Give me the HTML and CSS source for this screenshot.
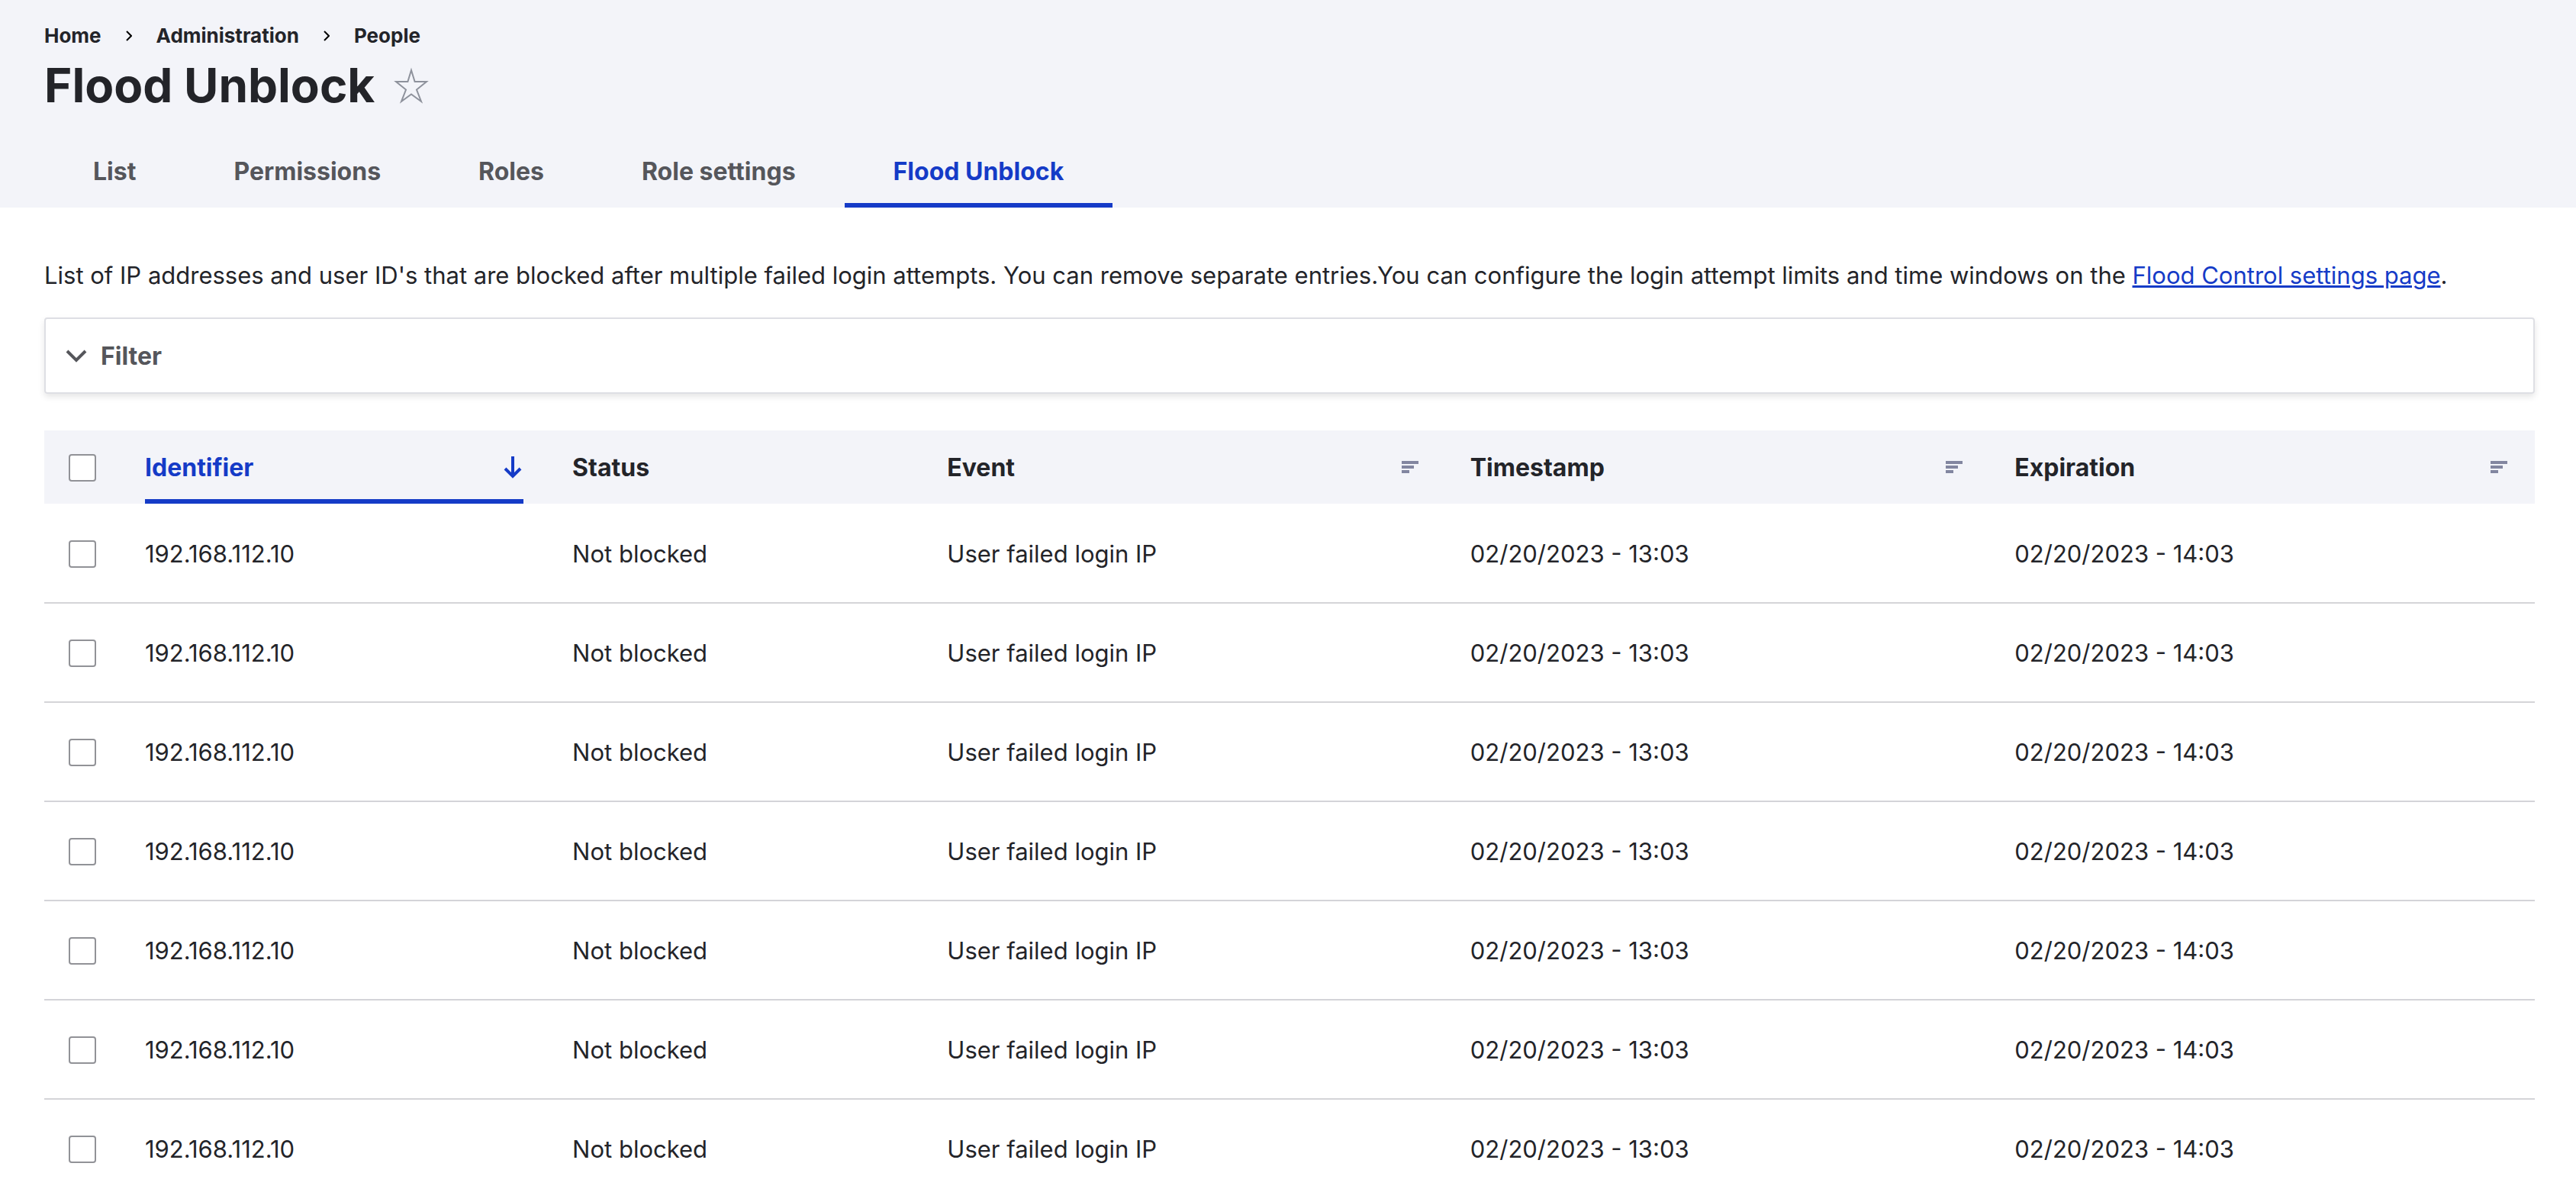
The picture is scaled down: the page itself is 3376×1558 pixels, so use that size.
FILE: index.html
```html
<!DOCTYPE html>
<html lang="en">
<head>
    <meta charset="UTF-8">
    <meta name="viewport" content="width=device-width, initial-scale=1.0">
    <title>Flood Unblock</title>
    <link rel="stylesheet" href="styles.css">
</head>
<body>
    <header class="page-header">
        <nav class="breadcrumb" aria-label="Breadcrumb">
            <a href="#">Home</a>
            <svg class="breadcrumb-sep" viewBox="0 0 8 14"><path d="M1 1l6 6-6 6"/></svg>
            <a href="#">Administration</a>
            <svg class="breadcrumb-sep" viewBox="0 0 8 14"><path d="M1 1l6 6-6 6"/></svg>
            <a href="#">People</a>
        </nav>
        <div class="title-row">
            <h1>Flood Unblock</h1>
            <button type="button" class="shortcut" aria-label="Add to shortcuts">
                <svg viewBox="0 0 48 48"><path d="M24 4l4.600 15H44L31 29.500 37 45 24 35.500 11 45l6-15.500L4 19h15.400z"/></svg>
            </button>
        </div>
        <nav class="tabs" aria-label="Tabs">
            <a href="#">List</a>
            <a href="#">Permissions</a>
            <a href="#">Roles</a>
            <a href="#">Role settings</a>
            <a href="#" class="active" aria-current="page">Flood Unblock</a>
        </nav>
    </header>

    <main class="content">
        <p class="intro">List of IP addresses and user ID's that are blocked after multiple failed login attempts. You can remove separate entries.You can configure the login attempt limits and time windows on the <a href="#">Flood Control settings page</a>.</p>

        <details class="filter">
            <summary>
                <svg class="chevron" viewBox="0 0 28 18"><path d="M2 2l12 12L26 2"/></svg>
                Filter
            </summary>
        </details>

        <table class="flood-table">
            <colgroup>
                <col class="col-select">
                <col class="col-identifier">
                <col class="col-status">
                <col class="col-event">
                <col class="col-timestamp">
                <col class="col-expiration">
            </colgroup>
            <thead>
                <tr>
                    <th><input type="checkbox" id="selectAll" aria-label="Select all rows"></th>
                    <th><a href="#" class="sort sorted">Identifier <svg viewBox="0 0 32 32"><path class="arrow" d="M18 1v26M8 17l10 10 10-10"/></svg></a></th>
                    <th>Status</th>
                    <th><a href="#" class="sort">Event <svg viewBox="0 0 32 32"><path d="M6 7h22v4H6zM6 13h16v4H6zM6 19h10v4H6z"/></svg></a></th>
                    <th><a href="#" class="sort">Timestamp <svg viewBox="0 0 32 32"><path d="M6 7h22v4H6zM6 13h16v4H6zM6 19h10v4H6z"/></svg></a></th>
                    <th><a href="#" class="sort">Expiration <svg viewBox="0 0 32 32"><path d="M6 7h22v4H6zM6 13h16v4H6zM6 19h10v4H6z"/></svg></a></th>
                </tr>
            </thead>
            <tbody>
                <tr>
                    <td><input type="checkbox" aria-label="Select row 1"></td>
                    <td>192.168.112.10</td>
                    <td>Not blocked</td>
                    <td>User failed login IP</td>
                    <td>02/20/2023 - 13:03</td>
                    <td>02/20/2023 - 14:03</td>
                </tr>
                <tr>
                    <td><input type="checkbox" aria-label="Select row 2"></td>
                    <td>192.168.112.10</td>
                    <td>Not blocked</td>
                    <td>User failed login IP</td>
                    <td>02/20/2023 - 13:03</td>
                    <td>02/20/2023 - 14:03</td>
                </tr>
                <tr>
                    <td><input type="checkbox" aria-label="Select row 3"></td>
                    <td>192.168.112.10</td>
                    <td>Not blocked</td>
                    <td>User failed login IP</td>
                    <td>02/20/2023 - 13:03</td>
                    <td>02/20/2023 - 14:03</td>
                </tr>
                <tr>
                    <td><input type="checkbox" aria-label="Select row 4"></td>
                    <td>192.168.112.10</td>
                    <td>Not blocked</td>
                    <td>User failed login IP</td>
                    <td>02/20/2023 - 13:03</td>
                    <td>02/20/2023 - 14:03</td>
                </tr>
                <tr>
                    <td><input type="checkbox" aria-label="Select row 5"></td>
                    <td>192.168.112.10</td>
                    <td>Not blocked</td>
                    <td>User failed login IP</td>
                    <td>02/20/2023 - 13:03</td>
                    <td>02/20/2023 - 14:03</td>
                </tr>
                <tr>
                    <td><input type="checkbox" aria-label="Select row 6"></td>
                    <td>192.168.112.10</td>
                    <td>Not blocked</td>
                    <td>User failed login IP</td>
                    <td>02/20/2023 - 13:03</td>
                    <td>02/20/2023 - 14:03</td>
                </tr>
                <tr>
                    <td><input type="checkbox" aria-label="Select row 7"></td>
                    <td>192.168.112.10</td>
                    <td>Not blocked</td>
                    <td>User failed login IP</td>
                    <td>02/20/2023 - 13:03</td>
                    <td>02/20/2023 - 14:03</td>
                </tr>
            </tbody>
        </table>
    </main>
</body>
</html>
```
FILE: styles.css
```css
* { box-sizing: border-box; }
html { scrollbar-width: none; }
body { margin: 0; font-family: Inter, "Liberation Sans", sans-serif; font-size: 31px; line-height: 48px; color: #232429; background-color: #fff; }
a { color: #153bc7; }

.page-header { padding: 28px 54px 0 58px; background-color: #f3f4f9; }
.breadcrumb { display: flex; align-items: center; gap: 32px; font-size: 26px; font-weight: 700; line-height: 38px; }
.breadcrumb a { color: inherit; text-decoration: none; }
.breadcrumb-sep { width: 8px; height: 14px; fill: none; stroke: #000; stroke-width: 2; }
.title-row { display: flex; align-items: center; gap: 24px; }
h1 { margin: 0; font-size: 62px; font-weight: 700; line-height: 92px; }
.shortcut { width: 48px; height: 48px; padding: 0; border: none; background: none; cursor: pointer; }
.shortcut svg { display: block; fill: none; stroke: #8e929c; stroke-width: 2; }
.tabs { display: flex; padding-top: 18px; }
.tabs a { padding: 25px 64px 17px; border-bottom: 6px solid transparent; color: #55565b; font-size: 32px; font-weight: 700; text-decoration: none; }
.tabs a.active { color: #153bc7; border-color: #153bc7; }

.content { padding: 65px 54px 0 58px; }
.intro { margin: 0 0 31px; }
.intro a { text-decoration-thickness: 3px; }

.filter { margin-bottom: 48px; border: 2px solid #dedfe4; border-radius: 4px; box-shadow: 0 4px 8px rgba(0, 0, 0, 0.1); }
.filter summary { display: flex; align-items: center; gap: 18px; padding: 25px 26px 23px; color: #55565b; font-size: 32px; font-weight: 700; cursor: pointer; }
.chevron { width: 28px; height: 18px; fill: none; stroke: #55565b; stroke-width: 4; }

.flood-table { width: 100%; table-layout: fixed; border-collapse: collapse; }
.col-select { width: 100px; }
.col-identifier { width: 17.16%; }
.col-status { width: 15.05%; }
.col-event { width: 21%; }
.col-timestamp { width: 21.86%; }
th, td { padding: 2px 32px 0; text-align: left; }
th { height: 96px; background-color: #f3f4f9; font-size: 32px; font-weight: 700; }
td { height: 130px; border-bottom: 2px solid #d4d4d8; }
.sort { display: flex; align-items: center; justify-content: space-between; height: 94px; border: solid transparent; border-width: 6px 0; color: inherit; text-decoration: none; }
.sort svg { width: 32px; height: 32px; fill: #8286a0; }
.sorted { color: #153bc7; border-bottom-color: #153bc7; }
.sorted .arrow { fill: none; stroke: #153bc7; stroke-width: 4; }
input[type="checkbox"] { display: block; width: 36px; height: 36px; margin: 0; appearance: none; border: 2px solid #919297; border-radius: 4px; background-color: #fff; }
```
